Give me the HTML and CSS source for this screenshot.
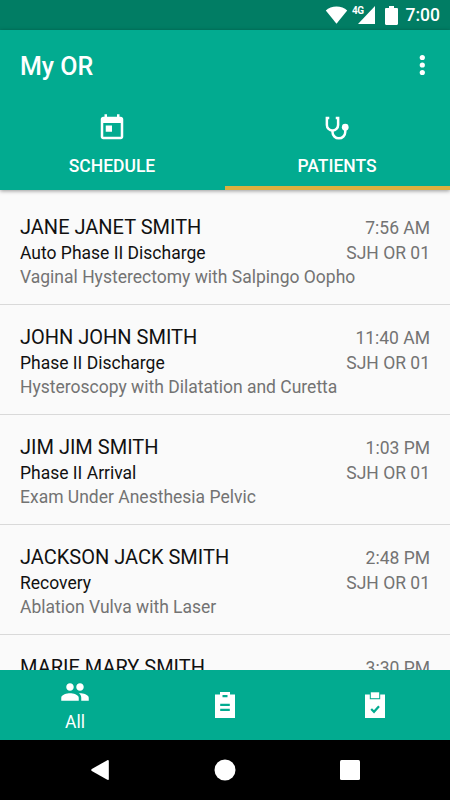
FILE: index.html
```html
<!DOCTYPE html>
<html lang="en">

<head>
    <meta charset="UTF-8">
    <meta name="viewport" content="width=device-width, initial-scale=1.0">
    <title>My OR</title>
    <link rel="stylesheet" href="styles.css">
</head>

<body>
    <div class="screen">
        <div class="status-bar">
            <svg class="wifi" width="23" height="18" viewBox="0 0 23 18">
                <path d="M11.5 17.8L.8 4.5C3.5 1.8 7.3.4 11.5.4s8 1.4 10.700 4.100z" />
            </svg>
            <span class="network">4G</span>
            <svg class="signal" width="17" height="18" viewBox="0 0 17 18">
                <path d="M17 0v18H0z" />
            </svg>
            <svg class="battery" width="13" height="19" viewBox="0 0 13 19">
                <path d="M4 0h5v2h2.800c.7 0 1.200.5 1.200 1.200v14.600c0 .7-.5 1.200-1.200 1.200H1.200C.5 19 0 18.500 0 17.800V3.200C0 2.500.5 2 1.200 2H4z" />
            </svg>
            <span class="clock">7:00</span>
        </div>

        <header class="header">
            <div class="toolbar">
                <h1>My OR</h1>
                <svg width="6" height="22" viewBox="0 0 6 22">
                    <circle cx="3.300" cy="3.500" r="2.600" />
                    <circle cx="3.300" cy="11" r="2.600" />
                    <circle cx="3.300" cy="18.500" r="2.600" />
                </svg>
            </div>
            <nav class="tabs">
                <div class="tab">
                    <svg width="30" height="30" viewBox="0 0 24 24">
                        <path d="M19 3h-1V1h-2v2H8V1H6v2H5c-1.110 0-1.990.9-1.990 2L3 19c0 1.100.89 2 2 2h14c1.100 0 2-.9 2-2V5c0-1.100-.9-2-2-2zm0 16H5V8h14v11zM7 10h5v5H7z" />
                    </svg>
                    <span>SCHEDULE</span>
                </div>
                <div class="tab active">
                    <svg width="30" height="30" viewBox="0 0 24 24">
                        <g class="stroke">
                            <path d="M5.800 4H3.900v5.500a4.500 4.500 0 0 0 9 0V4H11" />
                            <path d="M8.400 14v1.200a5.100 5.100 0 0 0 10.200 0v-3" />
                        </g>
                        <circle cx="18.600" cy="11.300" r="2.700" />
                    </svg>
                    <span>PATIENTS</span>
                </div>
            </nav>
        </header>

        <main class="list">
            <div class="row">
                <div class="patient">
                    <div class="name">JANE JANET SMITH</div>
                    <div class="phase">Auto Phase II Discharge</div>
                    <div class="procedure">Vaginal Hysterectomy with Salpingo Oopho</div>
                </div>
                <div class="info">
                    <div class="time">7:56 AM</div>
                    <div class="room">SJH OR 01</div>
                </div>
            </div>
            <div class="row">
                <div class="patient">
                    <div class="name">JOHN JOHN SMITH</div>
                    <div class="phase">Phase II Discharge</div>
                    <div class="procedure">Hysteroscopy with Dilatation and Curetta</div>
                </div>
                <div class="info">
                    <div class="time">11:40 AM</div>
                    <div class="room">SJH OR 01</div>
                </div>
            </div>
            <div class="row">
                <div class="patient">
                    <div class="name">JIM JIM SMITH</div>
                    <div class="phase">Phase II Arrival</div>
                    <div class="procedure">Exam Under Anesthesia Pelvic</div>
                </div>
                <div class="info">
                    <div class="time">1:03 PM</div>
                    <div class="room">SJH OR 01</div>
                </div>
            </div>
            <div class="row">
                <div class="patient">
                    <div class="name">JACKSON JACK SMITH</div>
                    <div class="phase">Recovery</div>
                    <div class="procedure">Ablation Vulva with Laser</div>
                </div>
                <div class="info">
                    <div class="time">2:48 PM</div>
                    <div class="room">SJH OR 01</div>
                </div>
            </div>
            <div class="row">
                <div class="patient">
                    <div class="name">MARIE MARY SMITH</div>
                </div>
                <div class="info">
                    <div class="time">3:30 PM</div>
                </div>
            </div>
        </main>

        <nav class="bottom-bar">
            <div class="bottom-item">
                <svg width="30" height="30" viewBox="0 0 24 24">
                    <path d="M16 11c1.660 0 2.990-1.340 2.990-3S17.660 5 16 5s-3 1.340-3 3 1.340 3 3 3zm-8 0c1.660 0 2.990-1.340 2.990-3S9.660 5 8 5 5 6.340 5 8s1.340 3 3 3zm0 2c-2.330 0-7 1.170-7 3.500V19h14v-2.500c0-2.330-4.670-3.500-7-3.500zm8 0c-.29 0-.62.02-.97.05 1.160.84 1.970 1.970 1.970 3.450V19h6v-2.500c0-2.330-4.670-3.500-7-3.500z" />
                </svg>
                <span>All</span>
            </div>
            <div class="bottom-item">
                <svg width="20" height="26" viewBox="0 0 20 26">
                    <path fill-rule="evenodd" d="M0 2.500h5V0h10v2.500h5V26H0zM7.500 3v2.200h5V3zM5.200 11.800V14h9.600v-2.200zm0 5V19h9.600v-2.200z" />
                </svg>
            </div>
            <div class="bottom-item">
                <svg width="20" height="26" viewBox="0 0 20 26">
                    <path d="M0 2.500h4.800v4.800h10.400V2.500H20V26H0z" />
                    <path d="M5.800.3h8.400v5.900H5.800z" />
                    <path class="check" d="M6.200 17l2.800 2.800 5-5.600" />
                </svg>
            </div>
        </nav>

        <div class="system-nav">
            <svg width="20" height="22" viewBox="0 0 20 22">
                <path d="M17.300 1.200c.8-.4 1.500 0 1.500.9v17.800c0 .9-.7 1.300-1.500.9L1.800 11.900c-.8-.5-.8-1.300 0-1.800z" />
            </svg>
            <svg width="22" height="22" viewBox="0 0 22 22">
                <circle cx="11" cy="11" r="10.500" />
            </svg>
            <svg width="20" height="20" viewBox="0 0 20 20">
                <rect width="20" height="20" rx="1.500" />
            </svg>
        </div>
    </div>
</body>

</html>
```
FILE: styles.css
```css
body {
    font-family: Roboto, sans-serif;
    margin: 0;
    padding: 0;
    background-color: #fafafa;
}

svg {
    display: block;
    fill: #fff;
}

.screen {
    display: flex;
    flex-direction: column;
    height: 800px;
    overflow: hidden;
}

.status-bar {
    display: flex;
    align-items: center;
    justify-content: flex-end;
    flex: none;
    box-sizing: border-box;
    height: 30px;
    padding-right: 10px;
    background-color: #017d64;
    color: #fff;
}

.network {
    margin: 0 -6px 9px 4px;
    font-size: 10px;
    font-weight: 700;
    line-height: 12px;
    letter-spacing: -0.5px;
}

.battery {
    margin: 0 8px 0 10px;
}

.clock {
    font-size: 17.5px;
    font-weight: 500;
    line-height: 32px;
}

.header {
    flex: none;
    height: 160px;
    background-color: #02ab90;
    color: #fff;
    box-shadow: 0 1px 4px rgba(0, 0, 0, 0.4);
    z-index: 1;
}

.toolbar {
    display: flex;
    align-items: center;
    justify-content: space-between;
    height: 70px;
    padding: 0 25px 0 20px;
}

.toolbar h1 {
    margin: 3px 0 0;
    font-size: 25px;
    font-weight: 500;
    line-height: 30px;
}

.tabs {
    display: flex;
    height: 90px;
}

.tab {
    display: flex;
    flex: 1;
    flex-direction: column;
    align-items: center;
    box-sizing: border-box;
    padding: 13px 1px 0 0;
    font-size: 17.5px;
    font-weight: 500;
    line-height: 20px;
}

.tab span {
    margin-top: 13px;
}

.tab.active {
    border-bottom: 4px solid #dcb03f;
}

.stroke {
    fill: none;
    stroke: #fff;
    stroke-width: 2;
}

.list {
    flex: 1;
    min-height: 0;
    padding-top: 5px;
    overflow: hidden;
    background-color: #fafafa;
}

.row {
    display: flex;
    justify-content: space-between;
    box-sizing: border-box;
    height: 110px;
    padding: 20px 20px 0;
    border-bottom: 1px solid #d9d9d9;
    font-size: 17.5px;
    line-height: 24px;
    white-space: nowrap;
}

/* long procedure names run on under the room */
.patient {
    flex: 1;
    min-width: 0;
}

.name {
    font-size: 20px;
    color: #111;
}

.phase {
    margin-top: 2px;
    color: #111;
}

.procedure,
.info {
    color: #737373;
}

.info {
    text-align: right;
}

.time {
    padding-top: 1px;
}

.room {
    margin-top: 1px;
}

.bottom-bar {
    display: flex;
    flex: none;
    height: 70px;
    background-color: #02ab90;
    color: #fff;
}

.bottom-item {
    display: flex;
    flex: 1;
    flex-direction: column;
    align-items: center;
    justify-content: center;
    font-size: 17.5px;
    line-height: 20px;
}

.bottom-item span {
    margin: 5px 0 1px;
}

.check {
    fill: none;
    stroke: #02ab90;
    stroke-width: 2.2;
}

.system-nav {
    display: flex;
    align-items: center;
    justify-content: space-between;
    flex: none;
    height: 60px;
    padding: 0 90px;
    background-color: #000;
}
```
